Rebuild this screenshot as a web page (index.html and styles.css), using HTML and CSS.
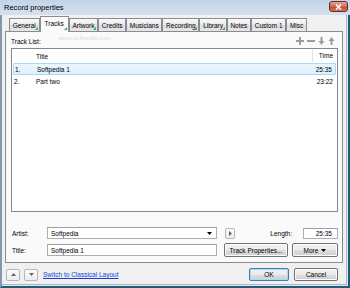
FILE: index.html
```html
<!DOCTYPE html>
<html lang="en">
<head>
    <meta charset="UTF-8">
    <meta name="viewport" content="width=device-width, initial-scale=1.0">
    <title>Record properties</title>
    <link rel="stylesheet" href="styles.css">
</head>
<body>
<div class="window">
    <!-- Title bar -->
    <div class="titlebar">
        <span class="title">Record properties</span>
        <button class="close">
            <svg width="7" height="6" viewBox="0 0 7 6"><path d="M1 0.5l5 5M6 0.5l-5 5" stroke="#fff" stroke-width="1.6"/></svg>
        </button>
    </div>

    <div class="frame">
        <div class="client">
            <!-- Tabs -->
            <ul class="tabs">
                <li class="tab has-data">General</li>
                <li class="tab active has-data">Tracks</li>
                <li class="tab has-data">Artwork</li>
                <li class="tab">Credits</li>
                <li class="tab">Musicians</li>
                <li class="tab has-data">Recording</li>
                <li class="tab has-data">Library</li>
                <li class="tab">Notes</li>
                <li class="tab">Custom 1</li>
                <li class="tab">Misc</li>
            </ul>

            <div class="panel">
                <div class="list-toolbar">
                    <span>Track List:</span>
                    <span class="watermark">www.softpedia.com</span>
                    <div class="list-tools">
                        <svg width="8" height="8" viewBox="0 0 8 8"><path d="M3 0h2v3h3v2H5v3H3V5H0V3h3z"/></svg>
                        <svg width="8" height="8" viewBox="0 0 8 8"><path d="M0 3h8v2H0z"/></svg>
                        <svg width="7" height="8" viewBox="0 0 7 8"><path d="M2.5 0h2v4h2L3.5 8 0.5 4h2z"/></svg>
                        <svg width="7" height="8" viewBox="0 0 7 8"><path d="M3.5 0l3 4h-2v4h-2V4h-2z"/></svg>
                    </div>
                </div>

                <div class="tracklist">
                    <div class="track-head">
                        <span class="col-num"></span>
                        <span class="col-title">Title</span>
                        <span class="col-time">Time</span>
                    </div>
                    <div class="track selected">
                        <span class="col-num">1.</span>
                        <span class="col-title">Softpedia 1</span>
                        <span class="col-time">25:35</span>
                    </div>
                    <div class="track">
                        <span class="col-num">2.</span>
                        <span class="col-title">Part two</span>
                        <span class="col-time">23:22</span>
                    </div>
                </div>

                <div class="field-row artist-row">
                    <label class="field-label">Artist:</label>
                    <div class="combo">
                        <span>Softpedia</span>
                        <svg width="5" height="3" viewBox="0 0 5 3"><path d="M0 0h5L2.5 3z"/></svg>
                    </div>
                    <button class="mini play">
                        <svg width="3" height="5" viewBox="0 0 3 5"><path d="M0 0l3 2.5L0 5z"/></svg>
                    </button>
                    <label class="length-label">Length:</label>
                    <div class="textbox length">25:35</div>
                </div>

                <div class="field-row title-row">
                    <label class="field-label">Title:</label>
                    <div class="textbox title-box">Softpedia 1</div>
                    <button class="btn props">Track Properties...</button>
                    <button class="btn more">More
                        <svg width="5" height="3" viewBox="0 0 5 3"><path d="M0 0h5L2.5 3z"/></svg>
                    </button>
                </div>
            </div>

            <!-- Footer -->
            <div class="footer">
                <button class="mini nav">
                    <svg width="5" height="3" viewBox="0 0 5 3"><path d="M0 3h5L2.5 0z"/></svg>
                </button>
                <button class="mini nav">
                    <svg width="5" height="3" viewBox="0 0 5 3"><path d="M0 0h5L2.5 3z"/></svg>
                </button>
                <a href="#" class="switch-link">Switch to Classical Layout</a>
                <button class="btn ok">OK</button>
                <button class="btn cancel">Cancel</button>
            </div>
        </div>
    </div>
</div>
</body>
</html>
```

FILE: styles.css
```css
* {
    box-sizing: border-box;
}
html, body {
    margin: 0;
    padding: 0;
}
body {
    width: 350px;
    height: 288px;
    overflow: hidden;
    font-family: "Liberation Sans", Arial, sans-serif;
    font-size: 6.5px;
    color: #000;
    background: #215d72;
}
button {
    font-family: inherit;
    font-size: inherit;
    color: inherit;
    margin: 0;
    padding: 0;
}
.window {
    height: 288px;
    display: flex;
    flex-direction: column;
}

/* Title bar */
.titlebar {
    height: 15px;
    flex: none;
    display: flex;
    align-items: center;
    justify-content: space-between;
    padding: 0 2px 0 4px;
    background: linear-gradient(#c3d3e7, #d5e1ef);
}
.title {
    font-size: 7.5px;
}
.close {
    width: 19px;
    height: 11px;
    margin-top: -2px;
    display: flex;
    align-items: center;
    justify-content: center;
    border: 1px solid #6b2a20;
    border-radius: 3px;
    background: linear-gradient(#e3a89c, #cf6a55 50%, #c0432f 51%, #d27a5e);
}

/* Window frame */
.frame {
    flex: 1;
    display: flex;
    border-left: 2px solid #8597ac;
    border-right: 2px solid #215d72;
    border-bottom: 2px solid #215d72;
    padding: 0 1px 1px 0;
    background: #dce6f2;
}
.client {
    flex: 1;
    display: flex;
    flex-direction: column;
    background: #f0f0f0;
    border-right: 1px solid #a9b8ca;
    border-bottom: 1px solid #a9b8ca;
    padding: 0 3px;
}

/* Tabs */
.tabs {
    list-style: none;
    margin: 0;
    padding: 0 0 0 4px;
    height: 16px;
    display: flex;
    align-items: flex-end;
}
.tab {
    position: relative;
    height: 13px;
    padding: 0 2.7px;
    display: flex;
    align-items: center;
    border: 1px solid #898c95;
    border-bottom: none;
    background: linear-gradient(#fafafa, #e9e9e9 50%, #dedede 51%, #e6e6e6);
    white-space: nowrap;
}
.tab.active {
    height: 16px;
    margin-bottom: -1px;
    padding: 0 4px 2px;
    background: #fafafa;
    z-index: 1;
}
.tab.has-data::after {
    content: "";
    position: absolute;
    right: 1px;
    bottom: 1px;
    border-left: 3px solid transparent;
    border-bottom: 3px solid #36b236;
}
.tab.active.has-data::after {
    bottom: 2px;
}

/* Tab panel */
.panel {
    height: 232px;
    display: flex;
    flex-direction: column;
    border: 1px solid #898c95;
    background: #fafafa;
    padding: 3px 4px 5px 5px;
}
.list-toolbar {
    height: 12px;
    display: flex;
    align-items: center;
}
.watermark {
    margin-left: 18px;
    color: #dedede;
    font-size: 6px;
    margin-top: -6px;
}
.list-tools {
    margin-left: auto;
    margin-right: 3px;
    display: flex;
    gap: 3px;
    fill: #9c9c9c;
}

/* Track list */
.tracklist {
    margin-top: 1px;
    height: 164px;
    border: 1px solid #828790;
    background: #fff;
}
.track-head, .track {
    display: flex;
    align-items: center;
}
.track-head {
    height: 14px;
}
.track {
    height: 12px;
}
.col-num {
    width: 24px;
    padding-left: 2px;
}
.col-title {
    flex: 1;
}
.col-time {
    width: 25px;
    text-align: right;
    padding-right: 4px;
}
.track-head .col-time {
    height: 12px;
    line-height: 12px;
    border-left: 1px solid #e2e3e6;
}
.track.selected {
    margin: 0 1px;
    background: linear-gradient(#eaf6fd, #dff1fc);
    border: 1px solid #a9d9f7;
    border-radius: 1px;
}
.track.selected .col-num {
    width: 23px;
    padding-left: 1px;
}
.track.selected .col-time {
    padding-right: 3px;
}

/* Fields */
.field-row {
    display: flex;
    align-items: center;
}
.artist-row {
    margin-top: 15px;
    height: 12px;
}
.title-row {
    margin-top: 4px;
    height: 14px;
}
.field-label {
    width: 36px;
    padding-left: 1px;
}
.combo, .textbox {
    height: 12px;
    border: 1px solid #abadb3;
    border-top-color: #9da0a8;
    background: #fff;
    display: flex;
    align-items: center;
    padding: 0 3px;
}
.combo {
    width: 170px;
    justify-content: space-between;
    padding-right: 4px;
}
.title-box {
    width: 170px;
}
.length-label {
    margin-left: auto;
}
.length {
    width: 35px;
    height: 11px;
    margin-left: 11px;
    justify-content: flex-end;
    padding-right: 5px;
}

/* Buttons */
.btn {
    height: 14px;
    border: 1px solid #707070;
    border-radius: 2px;
    background: linear-gradient(#f2f2f2, #ebebeb 50%, #dddddd 51%, #cfcfcf);
    box-shadow: inset 0 0 0 1px #fcfcfc;
}
.props {
    width: 64px;
    margin-left: 7px;
}
.more {
    width: 46px;
    margin-left: 4px;
    display: flex;
    align-items: center;
    justify-content: center;
    gap: 3px;
}
.mini {
    display: flex;
    align-items: center;
    justify-content: center;
    border: 1px solid #b4b8bc;
    border-radius: 2px;
    background: linear-gradient(#fbfbfb, #ececec);
    fill: #666;
}
.play {
    width: 10px;
    height: 11px;
    margin-left: 8px;
}

/* Footer */
.footer {
    margin-top: 5px;
    height: 13px;
    display: flex;
    align-items: center;
    padding: 0 5px 0 1px;
}
.nav {
    width: 14px;
    height: 12px;
    margin-right: 4px;
}
.switch-link {
    margin-left: 1px;
    color: #0f3fd7;
}
.ok {
    margin-left: auto;
    width: 40px;
    height: 13px;
    border-color: #3c7fb1;
    box-shadow: inset 0 0 0 1px #a5dbf6;
}
.cancel {
    margin-left: 5px;
    width: 44px;
    height: 13px;
}
```
